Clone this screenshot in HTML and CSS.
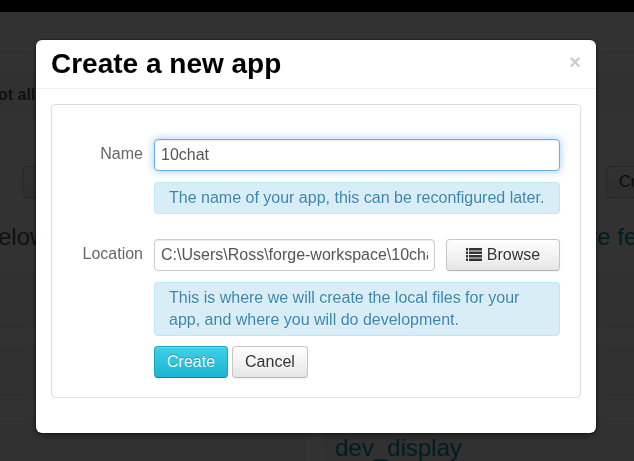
FILE: index.html
```html
<!DOCTYPE html>
<html lang="en">
<head>
<meta charset="utf-8">
<title>Create a new app</title>
<link rel="stylesheet" href="styles.css">
</head>
<body>
<div class="page">
  <div class="navbar"></div>
  <div class="subnav"></div>
  <p class="notice">ot allowed</p>
  <div class="toolbar">
    <button class="btn wide" type="button"></button>
    <button class="btn" type="button">Create</button>
  </div>
  <div class="headings">
    <h2>elow</h2>
    <h2><a href="#">re features</a></h2>
  </div>
  <div class="columns">
    <div class="list"><div class="row"></div><div class="row"></div><div class="row"></div></div>
    <div class="list"><div class="row"></div><div class="row"></div><div class="row"><a href="#">dev_display</a></div></div>
  </div>
</div>
<div class="backdrop"></div>
<div class="modal" role="dialog" aria-labelledby="title">
  <header class="modal-header">
    <h1 id="title">Create a new app</h1>
    <button class="close" type="button" aria-label="Close">×</button>
  </header>
  <form class="form">
    <label for="name">Name</label>
    <div class="controls">
      <input class="focused" id="name" type="text" value="10chat">
      <p class="help">The name of your app, this can be reconfigured later.</p>
    </div>
    <label for="location">Location</label>
    <div class="controls">
      <div class="picker">
        <input id="location" type="text" value="C:\Users\Ross\forge-workspace\10chat">
        <button class="btn browse" type="button">
          <svg width="16" height="14" viewBox="0 0 16 14" fill="#333" aria-hidden="true"><path d="M0 0h2v2.400H0zM0 3.500h2v2.400H0zM0 7h2v2.400H0zM0 10.500h2v2.400H0zM3 0h13v2.400H3zM3 3.500h13v2.400H3zM3 7h13v2.400H3zM3 10.500h13v2.400H3z"/></svg>
          Browse
        </button>
      </div>
      <p class="help">This is where we will create the local files for your app, and where you will do development.</p>
      <div class="actions">
        <button class="btn primary" type="submit">Create</button>
        <button class="btn" type="button">Cancel</button>
      </div>
    </div>
  </form>
</div>
</body>
</html>
```
FILE: styles.css
```css
* { box-sizing: border-box; }

body {
  margin: 0;
  color: #555;
  font: 16px/22px "Liberation Sans", Arial, sans-serif;
}

h1, h2, p { margin: 0; }

.page {
  height: 100vh;
  overflow: hidden;
  background: #fbfbfb;
}

.navbar { height: 12px; background: #000; }

.subnav { height: 41px; border-bottom: 1px solid #d8d8d8; }

.notice {
  margin-top: 20px;
  padding: 11px 0 12px;
  background: #f2f2f2;
  color: #555;
  font-weight: bold;
  text-indent: -2px;
}

.toolbar {
  display: flex;
  justify-content: space-between;
  margin: 48px -46px 0 23px;
}

.toolbar .btn { background: linear-gradient(#f8f8f8, #e6e6e6); }

.toolbar .wide { width: 80px; }

.headings {
  display: flex;
  justify-content: space-between;
  margin: 24px -70px 0 -2px;
}

.headings h2, .list a {
  font-size: 24px;
  line-height: 30px;
  font-weight: normal;
}

a { color: #0092aa; text-decoration: none; }

.columns {
  display: grid;
  grid-template-columns: 305px 1fr;
  gap: 19px;
  margin-top: 22px;
}

.list { border-right: 1px solid #e6e6e6; }
.list + .list { border-left: 1px solid #e6e6e6; border-right: 0; }

.row {
  height: 53px;
  margin-bottom: 20px;
  padding: 12px 10px;
  border: solid #e4e4e4;
  border-width: 1px 0;
  background: #f2f2f2;
}

.backdrop {
  position: fixed;
  inset: 0;
  background: rgba(0, 0, 0, 0.8);
}

.modal {
  position: fixed;
  top: 40px;
  left: 36px;
  right: 38px;
  padding-bottom: 35px;
  border-radius: 6px;
  background: #fff;
  box-shadow: 0 3px 7px rgba(0, 0, 0, 0.4), 0 0 2px #000;
}

.modal-header {
  display: flex;
  justify-content: space-between;
  align-items: center;
  height: 49px;
  padding: 0 15px;
  border-bottom: 1px solid #eee;
}

h1 {
  color: #000;
  font-size: 28px;
  line-height: 36px;
}

.close {
  padding: 0 0 4px;
  border: 0;
  background: none;
  color: #ccc;
  font: bold 20px/20px "Liberation Sans", Arial, sans-serif;
}

.form {
  display: grid;
  grid-template-columns: 91px 1fr;
  gap: 25px 11px;
  margin: 15px 15px 0;
  padding: 34px 20px 19px 0;
  border: 1px solid #ddd;
  border-radius: 4px;
}

label {
  padding-top: 4px;
  color: #666;
  text-align: right;
}

.controls { min-width: 0; }

input {
  display: block;
  width: 100%;
  min-width: 0;
  height: 32px;
  padding: 4px 6px;
  border: 1px solid #ccc;
  border-radius: 4px;
  outline: 0;
  background: #fff;
  color: #555;
  font: inherit;
  box-shadow: inset 0 1px 1px rgba(0, 0, 0, 0.08);
}

.focused {
  border-color: #66afe9;
  box-shadow: inset 0 1px 1px rgba(0, 0, 0, 0.08), 0 0 8px rgba(82, 168, 236, 0.6);
}

.help {
  margin-top: 11px;
  padding: 4px 8px 4px 14px;
  border: 1px solid #bce8f1;
  border-radius: 4px;
  background: #d9edf7;
  color: #3a87ad;
  text-shadow: 0 1px 0 rgba(255, 255, 255, 0.5);
}

.picker { display: flex; gap: 11px; }

.btn {
  height: 32px;
  padding: 4px 12px;
  border: 1px solid #c5c5c5;
  border-bottom-color: #b3b3b3;
  border-radius: 4px;
  background: linear-gradient(#fff, #e6e6e6);
  color: #333;
  font: inherit;
  text-shadow: 0 1px 1px rgba(255, 255, 255, 0.75);
  box-shadow: inset 0 1px 0 rgba(255, 255, 255, 0.2), 0 1px 2px rgba(0, 0, 0, 0.05);
}

.browse {
  display: flex;
  flex: 0 0 114px;
  align-items: center;
  justify-content: center;
  gap: 5px;
}

.actions {
  display: flex;
  gap: 4px;
  margin-top: 10px;
}

.primary {
  border-color: #1ba6c0 #1ba6c0 #148399;
  background: linear-gradient(#40d0e8, #1cb5d2);
  color: #fff;
  text-shadow: 0 -1px 0 rgba(0, 0, 0, 0.25);
}
```
